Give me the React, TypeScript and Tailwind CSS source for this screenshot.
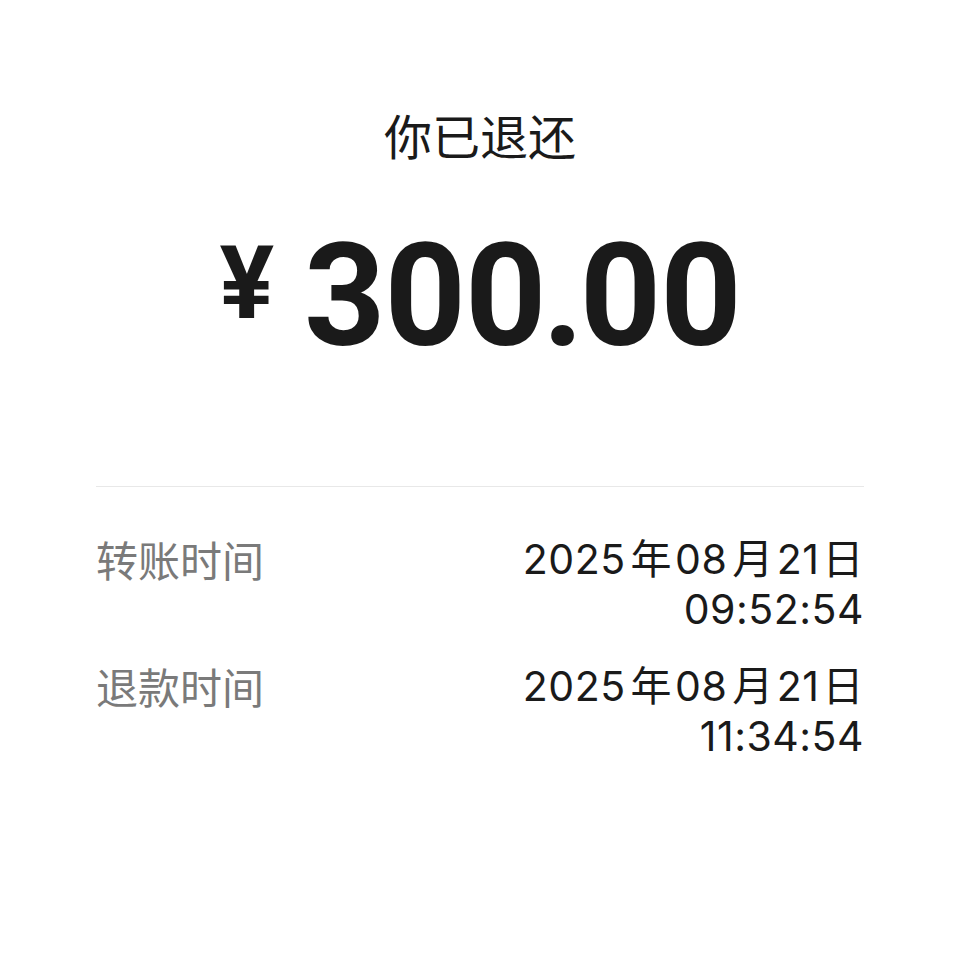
const cjk = '"Noto Sans CJK SC", sans-serif';

function DateText({ y, m, d }: { y: string; m: string; d: string }) {
  return (
    <div>
      {y}
      <span className="ml-[5px] mr-[3px]">年</span>
      {m}
      <span className="ml-[5px] mr-[3px]">月</span>
      {d}
      <span className="ml-[3px]">日</span>
    </div>
  );
}

function DetailRow({ label, time }: { label: string; time: string }) {
  return (
    <div className="flex items-start justify-between">
      <div className="text-[42px] leading-[50px] text-[#7a7a7a]">{label}</div>
      <div
        className="text-right text-[41px] leading-[50px] tracking-[0.5px] text-[#1a1a1a]"
        style={{ fontFamily: `Inter, ${cjk}` }}
      >
        <DateText y="2025" m="08" d="21" />
        <div>{time}</div>
      </div>
    </div>
  );
}

export default function App() {
  return (
    <div className="min-h-screen bg-white px-24 pt-[106px]" style={{ fontFamily: cjk }}>
      <h1 className="text-center text-[48px] leading-[56px] font-normal text-[#1a1a1a]">你已退还</h1>

      <div className="mt-[64px] flex items-start justify-center text-[#1a1a1a]" style={{ fontFamily: 'Roboto, sans-serif' }}>
        <span className="mt-[6px] mr-[30px] text-[102px] leading-none font-bold">¥</span>
        <span className="text-[142px] leading-none font-bold tracking-[-1px]">
          300<span className="-mx-[3px]">.</span>00
        </span>
      </div>

      <div className="mt-[118px] border-t border-[#e8e8e8]" />

      <div className="mt-[47px] flex flex-col gap-[27px]">
        <DetailRow label="转账时间" time="09:52:54" />
        <DetailRow label="退款时间" time="11:34:54" />
      </div>
    </div>
  );
}
